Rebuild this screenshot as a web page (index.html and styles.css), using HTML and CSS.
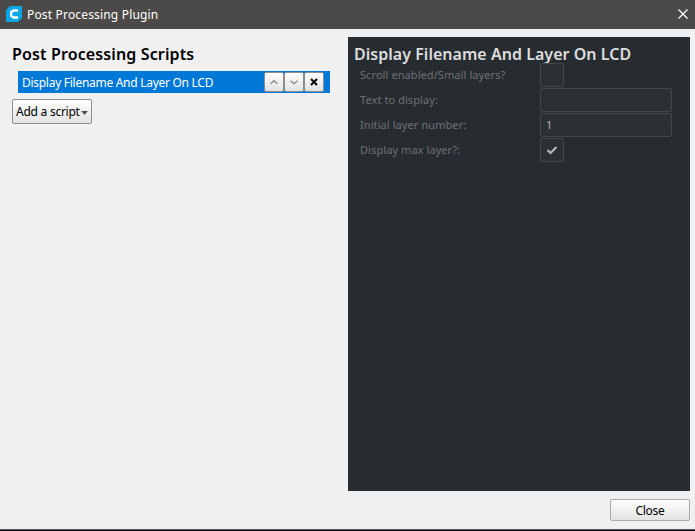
FILE: index.html
```html
<!DOCTYPE html>
<html lang="en">
<head>
<meta charset="utf-8">
<title>Post Processing Plugin</title>
<link rel="stylesheet" href="styles.css">
</head>
<body>
<div class="window">
  <header class="titlebar">
    <svg class="logo" width="16" height="16" viewBox="0 0 16 16"><path d="M4 0h12v12l-4 4H0V4z" fill="#0ca8e5"/><path d="M12 4.500H7.500L5.200 6v4l2.300 1.500H12" fill="none" stroke="#fff" stroke-width="2.300"/></svg>
    <span class="caption">Post Processing Plugin</span>
    <svg class="close-x" width="10" height="10" viewBox="0 0 10 10"><path d="M.5.5l9 9M9.500.5l-9 9" stroke="#fff" stroke-width="1.300"/></svg>
  </header>
  <main class="content">
    <section class="scripts">
      <h1 class="heading heading-scripts">Post Processing Scripts</h1>
      <div class="script-row">
        <span class="script-name">Display Filename And Layer On LCD</span>
        <button class="tool"><svg width="10" height="10" viewBox="0 0 10 10"><path d="M1.500 6.700L5 3.700l3.500 3" fill="none" stroke="#8b8b8b" stroke-width="1.400"/></svg></button>
        <button class="tool"><svg width="10" height="10" viewBox="0 0 10 10"><path d="M1.500 3.700L5 6.700l3.500-3" fill="none" stroke="#8b8b8b" stroke-width="1.400"/></svg></button>
        <button class="tool"><svg width="10" height="10" viewBox="0 0 10 10"><path d="M2 2l6 6M8 2L2 8" stroke="#000" stroke-width="2"/></svg></button>
      </div>
      <button class="add"><span class="add-label">Add a script</span><svg class="arrow" width="7" height="4" viewBox="0 0 7 4"><path d="M0 0h7L3.500 4z" fill="#555"/></svg></button>
    </section>
    <section class="settings">
      <h2 class="heading heading-settings">Display Filename And Layer On LCD</h2>
      <div class="setting"><span class="label">Scroll enabled/Small layers?</span><span class="box"></span></div>
      <div class="setting"><span class="label">Text to display:</span><span class="box field"></span></div>
      <div class="setting"><span class="label">Initial layer number:</span><span class="box field">1</span></div>
      <div class="setting"><span class="label">Display max layer?:</span><span class="box check"><svg width="12" height="10" viewBox="0 0 12 10"><path d="M1.500 5L4.500 8 10.500 2" fill="none" stroke="#b9bbbc" stroke-width="2"/></svg></span></div>
    </section>
  </main>
  <footer class="footer"><button class="close">Close</button></footer>
</div>
</body>
</html>
```
FILE: styles.css
```css
* { box-sizing: border-box; }
body { margin: 0; font-family: "Noto Sans", "Open Sans", sans-serif; font-size: 12px; }
.window { width: 695px; height: 531px; display: flex; flex-direction: column; background: #f0f0f0; border-bottom: 1px solid #0b0a12; box-shadow: inset 0 -1px #58575a; }
.titlebar { height: 29px; flex: none; display: flex; align-items: center; padding: 0 7px 2px 6px; background: #4c4a48; color: #fff; }
.caption { flex: 1; margin-left: 5px; line-height: 18px; padding-top: 2px; white-space: nowrap; letter-spacing: 0.17px; }
.content { display: flex; height: 462px; padding: 8px 5px 0 12px; }
.scripts { width: 336px; }
.heading { margin: 0; font-size: 16px; font-weight: 600; line-height: 22px; white-space: nowrap; }
.heading-scripts { padding-top: 6px; height: 34px; letter-spacing: 0.13px; }
.script-row { width: 312px; height: 22px; margin-left: 6px; padding: 0 6px 0 4px; display: flex; align-items: center; background: #0078d7; color: #fff; }
.script-name { flex: 1; white-space: nowrap; line-height: 20px; padding-top: 2px; letter-spacing: -0.28px; }
button { font: inherit; border: 1px solid #8d8d8d; border-radius: 2px; background: linear-gradient(#fefefe, #e3e3e3); color: #000; padding: 0; display: flex; align-items: center; justify-content: center; }
.tool { width: 20px; height: 20px; flex: none; }
.add { width: 80px; height: 25px; margin-top: 6px; padding: 0 3px; justify-content: space-between; }
.add-label { white-space: nowrap; line-height: 20px; letter-spacing: -0.25px; }
.arrow { flex: none; margin-top: 2px; }
.settings { width: 342px; height: 454px; background: #272c30; }
.heading-settings { height: 26px; padding: 6px 0 0 6px; color: #dcddde; letter-spacing: 0.03px; }
.setting { height: 24px; margin: 0 0 1px 12px; display: flex; align-items: center; font-size: 11px; color: #6e7173; }
.label { width: 180px; white-space: nowrap; line-height: 20px; letter-spacing: 0.08px; }
.box { width: 24px; height: 24px; border: 1px solid #43474b; border-radius: 2px; background: #2b3034; }
.field { width: 132px; padding-left: 5px; line-height: 22px; color: #b3b6b7; }
.check { display: flex; align-items: center; justify-content: center; }
.footer { height: 38px; display: flex; justify-content: flex-end; padding: 8px 5px 0 0; }
.close { width: 80px; height: 22px; border-color: #aaa; letter-spacing: -0.3px; }
```
